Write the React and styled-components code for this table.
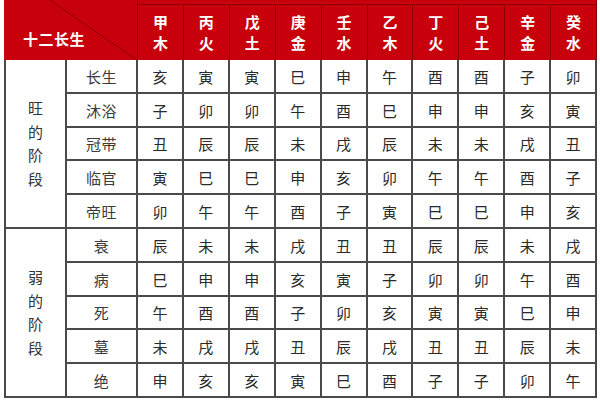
import React from 'react';
import styled, { createGlobalStyle } from 'styled-components';

const GlobalStyle = createGlobalStyle`
  html, body {
    margin: 0;
    padding: 0;
    background: #ffffff;
  }
  body {
    font-family: "Noto Sans CJK SC", "Noto Sans", sans-serif;
  }
`;

const RED = '#c8000b';
const DARK_RED = '#8e0006';
const LINE = '#4a4a4a';

const Page = styled.div`
  width: 600px;
  height: 400px;
  overflow: hidden;
  padding-left: 4px;
  box-sizing: border-box;
`;

const Grid = styled.div`
  display: grid;
  grid-template-columns: 63px 71px repeat(10, 1fr);
  grid-template-rows: 5px 55px repeat(10, 33.8px);
  width: 593px;
`;

const Corner = styled.div`
  grid-column: 1 / 3;
  grid-row: 1 / 3;
  position: relative;
  background: ${RED};
  border-right: 1px solid ${DARK_RED};
  display: flex;
  align-items: flex-end;
  padding: 0 0 11px 19px;
  box-sizing: border-box;
  color: #ffffff;
  font-size: 15px;
  font-weight: 700;
  line-height: 20px;
  letter-spacing: 0.5px;

  svg {
    position: absolute;
    inset: 0;
    width: 100%;
    height: 100%;
  }
  span {
    position: relative;
  }
`;

const TopStrip = styled.div`
  grid-column: 3 / 13;
  grid-row: 1;
  background: ${RED};
  border-bottom: 1px solid ${DARK_RED};
  border-right: 1px solid ${DARK_RED};
`;

const HeadCell = styled.div`
  background: ${RED};
  border-right: 1px solid ${DARK_RED};
  box-sizing: border-box;
  display: flex;
  flex-direction: column;
  align-items: center;
  justify-content: center;
  color: #ffffff;
  font-size: 15px;
  font-weight: 700;
  line-height: 21px;
  padding-bottom: 1px;
`;

const GroupCell = styled.div`
  grid-column: 1;
  grid-row: ${p => p.$row};
  border-left: 2px solid ${LINE};
  border-right: 2px solid ${LINE};
  border-bottom: 2px solid ${LINE};
  box-sizing: border-box;
  display: flex;
  flex-direction: column;
  align-items: center;
  justify-content: center;
  color: #333333;
  font-size: 15px;
  line-height: 23.5px;
`;

const Cell = styled.div`
  border-right: 2px solid ${LINE};
  border-bottom: 2px solid ${LINE};
  box-sizing: border-box;
  display: flex;
  align-items: center;
  justify-content: center;
  padding-top: 1px;
  color: ${p => (p.$stage ? '#3a3a3a' : '#2a2a2a')};
  font-size: 15px;
  letter-spacing: ${p => (p.$stage ? '0.5px' : '0')};
`;

const stems = ['甲木', '丙火', '戊土', '庚金', '壬水', '乙木', '丁火', '己土', '辛金', '癸水'];

const rows = [
  ['长生', '亥寅寅巳申午酉酉子卯'],
  ['沐浴', '子卯卯午酉巳申申亥寅'],
  ['冠带', '丑辰辰未戌辰未未戌丑'],
  ['临官', '寅巳巳申亥卯午午酉子'],
  ['帝旺', '卯午午酉子寅巳巳申亥'],
  ['衰', '辰未未戌丑丑辰辰未戌'],
  ['病', '巳申申亥寅子卯卯午酉'],
  ['死', '午酉酉子卯亥寅寅巳申'],
  ['墓', '未戌戌丑辰戌丑丑辰未'],
  ['绝', '申亥亥寅巳酉子子卯午'],
];

const groups = [
  { label: '旺的阶段', row: '3 / 8' },
  { label: '弱的阶段', row: '8 / 13' },
];

const App = () => {
  return (
    <>
      <GlobalStyle />
      <Page>
        <Grid>
          <Corner>
            <svg viewBox="0 0 134 60" preserveAspectRatio="none">
              <line x1="46" y1="0" x2="134" y2="60" stroke={DARK_RED} strokeWidth="1" />
            </svg>
            <span>十二长生</span>
          </Corner>
          <TopStrip />
          {stems.map(s => (
            <HeadCell key={s}>
              <span>{s[0]}</span>
              <span>{s[1]}</span>
            </HeadCell>
          ))}

          {groups.map(g => (
            <GroupCell key={g.label} $row={g.row}>
              {g.label.split('').map((c, i) => (
                <span key={i}>{c}</span>
              ))}
            </GroupCell>
          ))}

          {rows.map(([stage, values], r) => (
            <React.Fragment key={stage}>
              <Cell $stage style={{ gridRow: r + 3, gridColumn: 2 }}>{stage}</Cell>
              {values.split('').map((v, i) => (
                <Cell key={i} style={{ gridRow: r + 3, gridColumn: i + 3 }}>{v}</Cell>
              ))}
            </React.Fragment>
          ))}
        </Grid>
      </Page>
    </>
  );
};

export default App;
